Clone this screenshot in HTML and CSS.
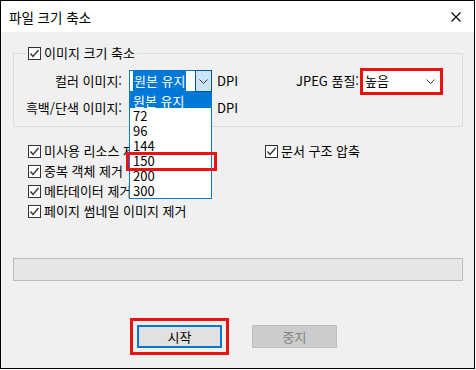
FILE: index.html
```html
<!DOCTYPE html>
<html lang="ko">
<head>
  <meta charset="UTF-8">
  <meta name="viewport" content="width=device-width, initial-scale=1.0">
  <title>파일 크기 축소</title>
  <link rel="stylesheet" href="styles.css">
</head>
<body>
  <div class="window">
    <div class="titlebar">
      <span class="title">파일 크기 축소</span>
      <svg class="close" width="10" height="10" viewBox="0 0 10 10"><path d="M0.5 0.5 L9.5 9.5 M9.5 0.5 L0.5 9.5" stroke="#000" stroke-width="1.1" fill="none"/></svg>
    </div>
    <div class="content">
      <fieldset class="group">
        <legend>
          <label class="check"><span class="box"><svg width="11" height="11" viewBox="0 0 11 11"><path d="M1.5 5.5 L4 8.5 L9.5 2" stroke="#333" stroke-width="1.4" fill="none"/></svg></span>이미지 크기 축소</label>
        </legend>
        <div class="dpi-grid">
          <span class="lbl">컬러 이미지:</span>
          <div class="combo focus">
            <span class="val"><span class="sel">원본 유지</span></span>
            <span class="drop"><svg width="9" height="5" viewBox="0 0 9 5"><path d="M0.5 0.5 L4.5 4.5 L8.5 0.5" stroke="#333" fill="none"/></svg></span>
            <ul class="list">
              <li class="hl">원본 유지</li>
              <li>72</li>
              <li>96</li>
              <li>144</li>
              <li class="marked">150</li>
              <li>200</li>
              <li>300</li>
            </ul>
          </div>
          <span class="unit">DPI</span>
          <span></span>
          <span class="lbl jpeg-lbl">JPEG 품질:</span>
          <div class="combo jpeg">
            <span class="val">높음</span>
            <span class="chev"><svg width="9" height="5" viewBox="0 0 9 5"><path d="M0.5 0.5 L4.5 4.5 L8.5 0.5" stroke="#333" fill="none"/></svg></span>
          </div>

          <span class="lbl">흑백/단색 이미지:</span>
          <div class="combo">
            <span class="val">원본 유지</span>
          </div>
          <span class="unit">DPI</span>
        </div>
      </fieldset>

      <div class="options">
        <label class="check"><span class="box"><svg width="11" height="11" viewBox="0 0 11 11"><path d="M1.5 5.5 L4 8.5 L9.5 2" stroke="#333" stroke-width="1.4" fill="none"/></svg></span>미사용 리소스 제거</label>
        <label class="check"><span class="box"><svg width="11" height="11" viewBox="0 0 11 11"><path d="M1.5 5.5 L4 8.5 L9.5 2" stroke="#333" stroke-width="1.4" fill="none"/></svg></span>문서 구조 압축</label>
        <label class="check"><span class="box"><svg width="11" height="11" viewBox="0 0 11 11"><path d="M1.5 5.5 L4 8.5 L9.5 2" stroke="#333" stroke-width="1.4" fill="none"/></svg></span>중복 객체 제거</label>
        <span></span>
        <label class="check"><span class="box"><svg width="11" height="11" viewBox="0 0 11 11"><path d="M1.5 5.5 L4 8.5 L9.5 2" stroke="#333" stroke-width="1.4" fill="none"/></svg></span>메타데이터 제거</label>
        <span></span>
        <label class="check"><span class="box"><svg width="11" height="11" viewBox="0 0 11 11"><path d="M1.5 5.5 L4 8.5 L9.5 2" stroke="#333" stroke-width="1.4" fill="none"/></svg></span>페이지 썸네일 이미지 제거</label>
      </div>

      <div class="progress"></div>

      <div class="buttons">
        <button class="btn primary">시작</button>
        <button class="btn" disabled>중지</button>
      </div>
    </div>
  </div>
</body>
</html>
```

FILE: styles.css
```css
* {margin: 0; padding: 0; box-sizing: border-box;}

ul, li {
  list-style: none;
}
body {
  background: #fff;
  font-family: "Noto Sans CJK KR", "Noto Sans", sans-serif;
  font-size: 13px;
  line-height: 16px;
  color: #000;
}
.window {
  width: 475px;
  height: 369px;
  border: 1px solid #000;
  display: flex;
  flex-direction: column;
}
.titlebar {
  height: 31px;
  background: #fff;
  display: flex;
  align-items: center;
  justify-content: space-between;
  padding: 1px 13px 0 8px;
}
.title {
  font-size: 13.5px;
}
.content {
  flex: 1;
  background: #f0f0f0;
  padding-top: 13px;
}

/* 그룹 박스 */
.group {
  margin: 0 11px 0 12px;
  border: 1px solid #dcdcdc;
  padding: 9px 19px 7px 0;
}
.group legend {
  margin-left: 12px;
  padding: 0 2px;
}
.check {
  display: flex;
  align-items: center;
  gap: 3px;
  white-space: nowrap;
}
.box {
  width: 13px;
  height: 13px;
  border: 1px solid #333;
  background: #fff;
  display: flex;
  align-items: center;
  justify-content: center;
}
.dpi-grid {
  display: grid;
  grid-template-columns: 108px 90px auto 1fr auto 83px;
  grid-auto-rows: 22px;
  row-gap: 5px;
  align-items: center;
}
.lbl {
  text-align: right;
  white-space: nowrap;
}
.jpeg-lbl {
  margin-right: 1px;
}
.unit {
  margin-left: 5px;
}
.combo {
  position: relative;
  margin-left: 7px;
  height: 22px;
  width: 83px;
  border: 1px solid #7a7a7a;
  background: #fff;
  display: flex;
  align-items: center;
}
.combo .val {
  flex: 1;
  padding-left: 3px;
}
.combo.focus {
  border-color: #0078d7;
}
.sel {
  background: #0078d7;
  color: #fff;
  padding: 1px 1px;
}
.drop {
  width: 17px;
  height: 22px;
  margin: -1px -1px -1px 0;
  background: #cce4f7;
  border: 1px solid #005499;
  display: flex;
  align-items: center;
  justify-content: center;
}
.chev {
  width: 16px;
  display: flex;
  justify-content: center;
  padding-right: 3px;
}
.combo.jpeg {
  margin-left: 0;
  height: 27px;
  border: 3px solid #ee1111;
}
.combo.jpeg .val {
  padding-left: 2px;
}

/* 펼쳐진 목록 */
.list {
  position: absolute;
  top: 21px;
  left: -1px;
  width: 83px;
  background: #fff;
  border: 1px solid #0078d7;
  z-index: 2;
}
.list li {
  height: 15px;
  line-height: 15px;
  padding-left: 3px;
  position: relative;
}
.list .hl {
  background: #0078d7;
  color: #fff;
}
.list .marked::after {
  content: "";
  box-sizing: border-box;
  position: absolute;
  left: -4px;
  top: -1px;
  width: 91px;
  height: 19px;
  border: 3px solid #ee1111;
}

.options {
  display: grid;
  grid-template-columns: 237px auto;
  grid-auto-rows: 20px;
  align-items: center;
  margin-top: 14px;
  padding-left: 27px;
}

.progress {
  margin: 37px 11px 0 12px;
  height: 23px;
  background: #e6e6e6;
  border: 1px solid #bcbcbc;
}

.buttons {
  display: flex;
  gap: 30px;
  margin-top: 44px;
  padding-left: 136px;
}
.btn {
  width: 85px;
  height: 23px;
  font: inherit;
  background: #e1e1e1;
  border: 1px solid #adadad;
  color: #000;
}
.btn.primary {
  border: 2px solid #0078d7;
  outline: 3px solid #ee1111;
  outline-offset: 4px;
}
.btn:disabled {
  background: #cccccc;
  border-color: #bfbfbf;
  color: #838383;
}
```
